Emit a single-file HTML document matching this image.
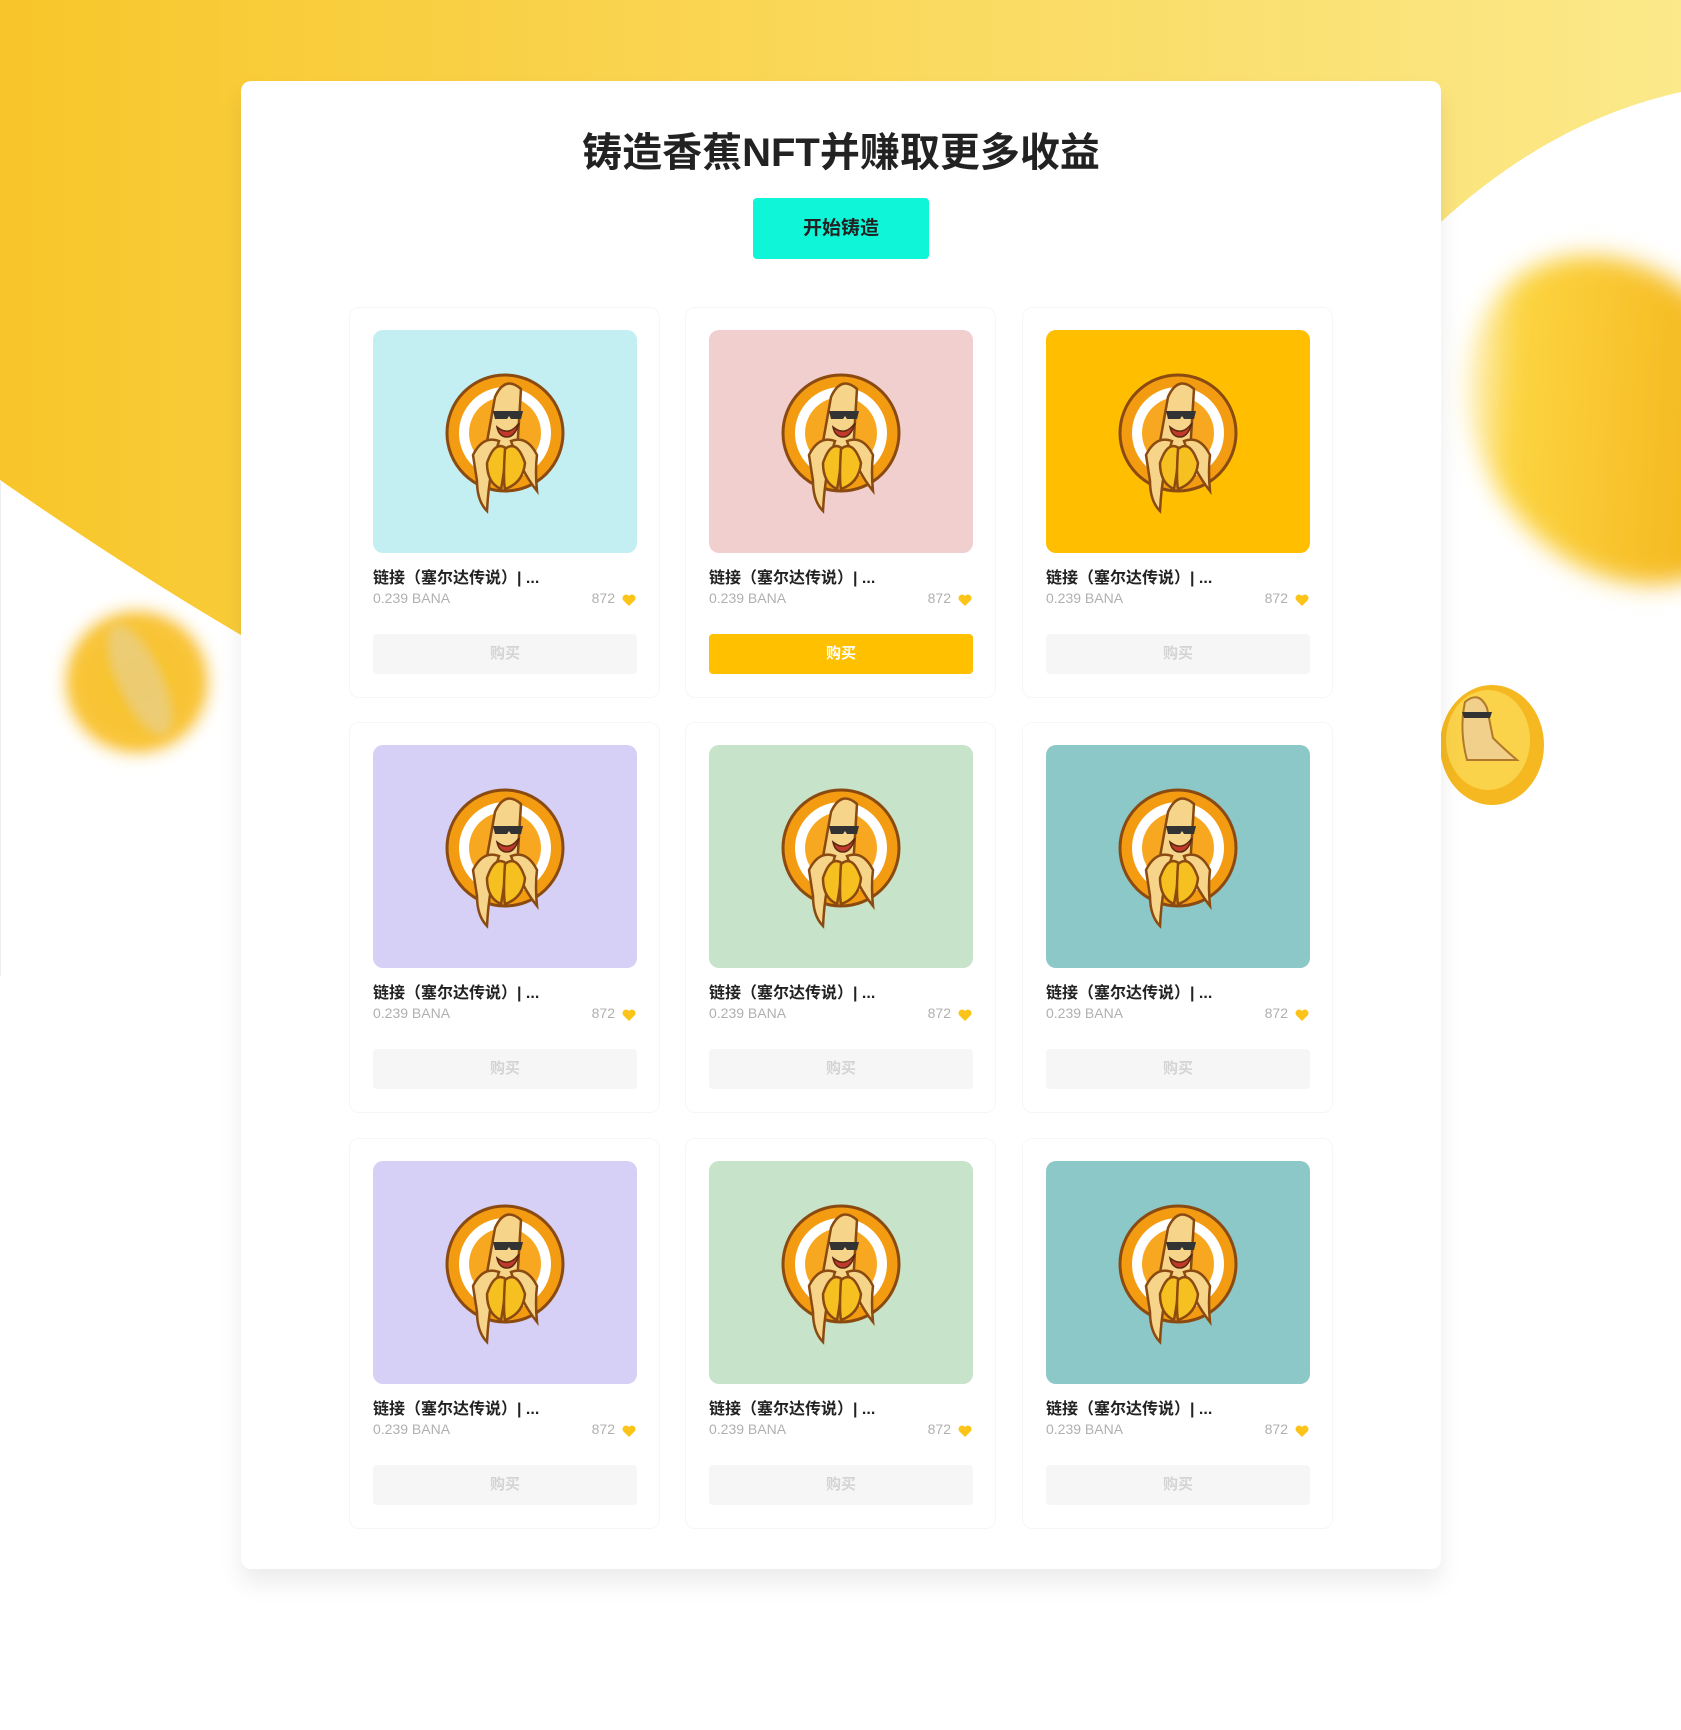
<!DOCTYPE html>
<html><head><meta charset="utf-8">
<style>
*{margin:0;padding:0;box-sizing:border-box}
body{width:1681px;height:1730px;position:relative;overflow:hidden;background:#fff;font-family:"Liberation Sans","Noto Sans CJK SC",sans-serif}
.bg{position:absolute;left:0;top:0}
.main{position:absolute;left:241px;top:81px;width:1200px;height:1488px;background:#fff;border-radius:10px;box-shadow:0 14px 24px rgba(0,0,0,0.08)}
h1{position:absolute;left:0;width:100%;top:50px;line-height:44px;text-align:center;font-size:40px;font-weight:bold;color:#222}
.btn{position:absolute;left:512px;top:117px;width:176px;height:61px;background:#0ff5d7;border-radius:4px;font-size:19px;font-weight:bold;color:#222;text-align:center;line-height:61px}
.card{position:absolute;width:311px;height:391px;border:1px solid #f6f6f6;border-radius:10px;background:#fff}
.img{position:absolute;left:23px;top:22px;width:264px;height:223px;border-radius:10px;overflow:hidden}
.img svg{position:absolute;left:62px;top:37px}
.t{position:absolute;left:23px;top:256px;font-size:16px;font-weight:bold;color:#222}
.p{position:absolute;left:23px;top:282px;font-size:14px;color:#b0b0b0}
.n{position:absolute;right:44px;top:282px;font-size:14px;color:#b0b0b0}
.h{position:absolute;right:23px;top:285px}
.b{position:absolute;left:23px;top:326px;width:264px;height:40px;border-radius:4px;background:#f6f6f6;color:#d4d4d4;font-size:15px;font-weight:bold;text-align:center;line-height:40px}
.b.y{background:#ffc000;color:#fff}
</style></head><body>
<svg class="bg" width="1681" height="1730">
<defs>
<linearGradient id="g1" x1="0" y1="0" x2="1" y2="0"><stop offset="0" stop-color="#f8c62a"/><stop offset="0.5" stop-color="#fad85a"/><stop offset="1" stop-color="#fbe98a"/></linearGradient>
<radialGradient id="c1" cx="0.5" cy="0.5" r="0.5"><stop offset="0" stop-color="#f6c22a"/><stop offset="0.75" stop-color="#f9c53a"/><stop offset="1" stop-color="#fff" stop-opacity="0"/></radialGradient>
<linearGradient id="c2" x1="0" y1="0" x2="1" y2="1"><stop offset="0" stop-color="#fff" stop-opacity="0"/><stop offset="0.25" stop-color="#fcd440"/><stop offset="0.7" stop-color="#f5b820"/><stop offset="1" stop-color="#e8a818" stop-opacity="0.6"/></linearGradient>
<filter id="bl"><feGaussianBlur stdDeviation="5"/></filter>
<filter id="bl2"><feGaussianBlur stdDeviation="12"/></filter>
</defs>
<path d="M0 0H1681V92C1600 110 1520 150 1441 222V635C1250 580 600 860 241 635C150 600 60 530 0 480Z" fill="url(#g1)"/>
<path d="M0 480Q130 570 241 635V700H0Z" fill="#fff"/>
<line x1="0.5" y1="480" x2="0.5" y2="976" stroke="#eee"/>
<circle cx="137" cy="682" r="86" fill="url(#c1)" filter="url(#bl)"/>
<ellipse cx="140" cy="680" rx="22" ry="60" fill="#e8d090" opacity="0.7" transform="rotate(-25 140 680)" filter="url(#bl)"/>
<ellipse cx="1620" cy="420" rx="140" ry="175" fill="url(#c2)" transform="rotate(-35 1620 420)" filter="url(#bl2)"/>
<ellipse cx="1492" cy="745" rx="52" ry="60" fill="#f5b820"/>
<ellipse cx="1488" cy="740" rx="42" ry="50" fill="#fbd34a"/>
<path d="M1465 702q14-12 22 6l6 30q10 10 24 22h-50q-8-30-2-58z" fill="#f0d08a" stroke="#b07a2a" stroke-width="2"/>
<path d="M1462 712h30l-2 6h-26z" fill="#333"/>
</svg>
<div class="main">
<h1>铸造香蕉NFT并赚取更多收益</h1>
<div class="btn">开始铸造</div>
</div>
<div id="cards"></div>
<script>
var banana='<svg width="140" height="150" viewBox="0 0 140 150"><circle cx="70" cy="66" r="58" fill="#f39c12" stroke="#8a4a10" stroke-width="3"/><circle cx="70" cy="66" r="46" fill="#fff"/><circle cx="70" cy="66" r="36" fill="#f8a820"/><path d="M60 30q10-22 26-8l-4 64h-32z" fill="#f6d58a" stroke="#8a4a10" stroke-width="2.5"/><path d="M58 44h30l-2 8h-10l-2-3-2 3h-12z" fill="#333"/><path d="M62 60q12 10 22-4q-4 14-12 14q-8 0-10-10z" fill="#c0392b" stroke="#5a2a10" stroke-width="1.5"/><path d="M38 88q10-20 26-14q-10 30-12 70q-10-10-10-30z" fill="#f6d58a" stroke="#8a4a10" stroke-width="2.5"/><path d="M102 88q-10-20-26-14q10 30 26 50q-2-20 0-36z" fill="#f6d58a" stroke="#8a4a10" stroke-width="2.5"/><path d="M52 96q8-24 20-14q-4 30 -6 40q-14 -6-14-26z" fill="#f5c020" stroke="#8a4a10" stroke-width="2.5"/><path d="M90 96q-8-24 -20-14q-2 30 0 40q18-6 20-26z" fill="#f5c020" stroke="#8a4a10" stroke-width="2.5"/></svg>';
var heart='<svg width="14" height="12" viewBox="0 0 14 12"><path d="M7 12L1.2 6.2A3.3 3.3 0 0 1 7 2a3.3 3.3 0 0 1 5.8 4.2z" fill="#fcc419"/></svg>';
var cols=['#c3eff2','#f2cfcf','#ffbf00','#d6d0f7','#c7e3ca','#8cc8c8','#d6d0f7','#c7e3ca','#8cc8c8'];
var xs=[349,685,1022],ys=[307,722,1138],h='';
for(var i=0;i<9;i++){h+='<div class="card" style="left:'+xs[i%3]+'px;top:'+ys[Math.floor(i/3)]+'px"><div class="img" style="background:'+cols[i]+'">'+banana+'</div><div class="t">链接（塞尔达传说）| ...</div><div class="p">0.239 BANA</div><div class="n">872</div><div class="h">'+heart+'</div><div class="b'+(i==1?' y':'')+'">购买</div></div>';}
document.getElementById('cards').innerHTML=h;
</script>
</body></html>
